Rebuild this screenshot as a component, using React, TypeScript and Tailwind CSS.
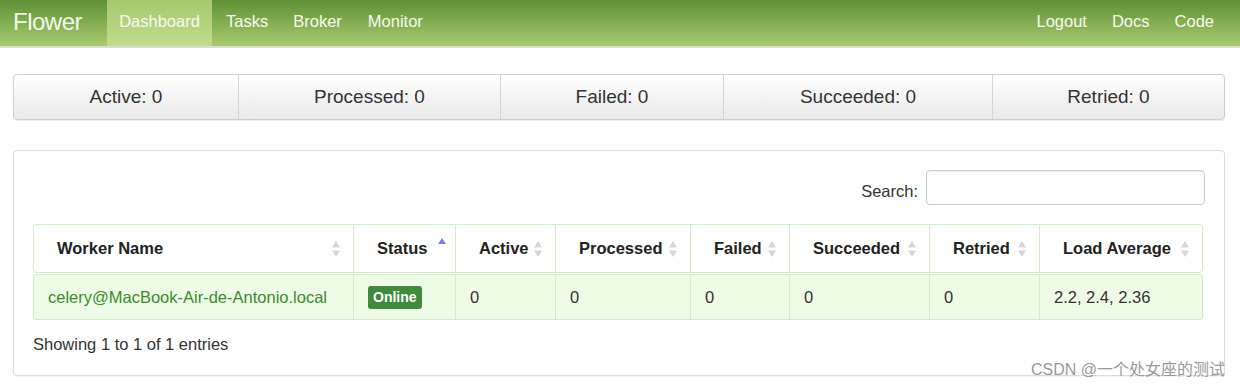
import React from "react";

const font = { fontFamily: '"Liberation Sans", Arial, sans-serif' };

const SortIcon = ({ active }: { active?: boolean }) =>
  active ? (
    <svg width="10" height="14" viewBox="0 0 10 14" className="absolute right-[8px] top-[12px]">
      <path d="M5 1 L9 7 L1 7 Z" fill="#7b7fe0" />
    </svg>
  ) : (
    <svg width="10" height="18" viewBox="0 0 10 18" className="absolute right-[12px] top-[15px]">
      <path d="M5 1 L9 7.5 L1 7.5 Z" fill="#d6d6d6" />
      <path d="M5 17 L9 10.5 L1 10.5 Z" fill="#d6d6d6" />
    </svg>
  );

const cols = [
  { name: "Worker Name", w: "w-[319px]", value: "celery@MacBook-Air-de-Antonio.local" },
  { name: "Status", w: "w-[102px]", value: "" },
  { name: "Active", w: "w-[100px]", value: "0" },
  { name: "Processed", w: "w-[135px]", value: "0" },
  { name: "Failed", w: "w-[99px]", value: "0" },
  { name: "Succeeded", w: "w-[140px]", value: "0" },
  { name: "Retried", w: "w-[110px]", value: "0" },
  { name: "Load Average", w: "flex-1", value: "2.2, 2.4, 2.36" },
];

const stats = [
  { label: "Active: 0", w: "w-[224px]" },
  { label: "Processed: 0", w: "w-[262px]" },
  { label: "Failed: 0", w: "w-[223px]" },
  { label: "Succeeded: 0", w: "w-[269px]" },
  { label: "Retried: 0", w: "flex-1" },
];

export default function App() {
  return (
    <div className="w-[1240px] h-[389px] bg-white text-[#333] relative overflow-hidden" style={font}>
      {/* NAVBAR */}
      <div className="h-[48px] flex bg-gradient-to-b from-[#5f9134] to-[#a9cb70] border-b-2 border-[#d9ddd2] text-[#f7faef]">
        <div className="pl-[13px] pr-[25px] flex items-center text-[24px] font-light tracking-[-0.5px] text-[#f3f7ea] pb-[3px]">Flower</div>
        <div className="flex text-[16.5px] pb-[3px]">
          <div className="flex items-center bg-gradient-to-b from-[#a6c96d] to-[#c3da8f] text-[#f6faee] w-[105px] justify-center mb-[-3px] pb-[3px]">
            Dashboard
          </div>
          <div className="pl-[14px] pr-[12px] flex items-center">Tasks</div>
          <div className="px-[13px] flex items-center">Broker</div>
          <div className="px-[13px] flex items-center">Monitor</div>
        </div>
        <div className="ml-auto flex text-[16.5px] pr-[26px] pb-[3px]">
          <div className="px-[12px] flex items-center">Logout</div>
          <div className="px-[13px] flex items-center">Docs</div>
          <div className="pl-[12px] flex items-center">Code</div>
        </div>
      </div>

      {/* STATS */}
      <div className="mx-[13px] mt-[26px] w-[1212px] h-[46px] flex border border-[#cfcfcf] rounded-[4px] bg-gradient-to-b from-white to-[#e9e9e9] shadow-[0_1px_1px_rgba(0,0,0,0.08)]">
        {stats.map((s, i) => (
          <div
            key={s.label}
            className={`${s.w} flex items-center justify-center text-[19px] text-[#333] ${i > 0 ? "border-l border-[#d4d4d4]" : ""}`}
          >
            {s.label}
          </div>
        ))}
      </div>

      {/* PANEL */}
      <div className="mx-[13px] mt-[30px] w-[1212px] h-[226px] border border-[#dcdcdc] rounded-[4px] px-[19px] shadow-[0_1px_1px_rgba(0,0,0,0.05)]">
        <div className="flex justify-end items-center pt-[19px] gap-[8px]">
          <span className="text-[16.5px] pt-[8px]">Search:</span>
          <div className="w-[279px] h-[35px] border border-[#cccccc] rounded-[4px] shadow-[inset_0_1px_1px_rgba(0,0,0,0.07)]"></div>
        </div>

        {/* TABLE */}
        <div className="mt-[19px] w-[1170px]">
          <div className="flex h-[49px] border border-[#d4ebc8] rounded-[4px]">
            {cols.map((c, i) => (
              <div
                key={c.name}
                className={`${c.w} relative flex items-center pl-[23px] text-[16.5px] font-bold text-[#222] ${i > 0 ? "border-l border-[#d4ebc8]" : ""}`}
              >
                {c.name}
                <SortIcon active={c.name === "Status"} />
              </div>
            ))}
          </div>
          <div className="flex h-[46px] mt-[1px] bg-[#eefbe6] border border-[#d4ebc8] rounded-[3px] text-[16.5px]">
            {cols.map((c, i) => (
              <div
                key={c.name}
                className={`${c.w} flex items-center pl-[14px] ${i > 0 ? "border-l border-[#d4ebc8]" : ""} ${i === 0 ? "text-[#3d8b2c]" : "text-[#333]"}`}
              >
                {c.name === "Status" ? (
                  <span className="bg-[#3f8a3c] text-white text-[14px] font-bold px-[5px] py-[1px] rounded-[3px]">Online</span>
                ) : (
                  c.value
                )}
              </div>
            ))}
          </div>
        </div>

        <div className="mt-[12px] text-[16.5px] text-[#333]">Showing 1 to 1 of 1 entries</div>
      </div>

      {/* watermark */}
      <div
        className="absolute right-[15px] bottom-[7px] text-[16px] text-[#999]"
        style={{ fontFamily: '"Liberation Sans", "Noto Sans CJK SC", sans-serif' }}
      >
        CSDN @一个处女座的测试
      </div>
    </div>
  );
}
